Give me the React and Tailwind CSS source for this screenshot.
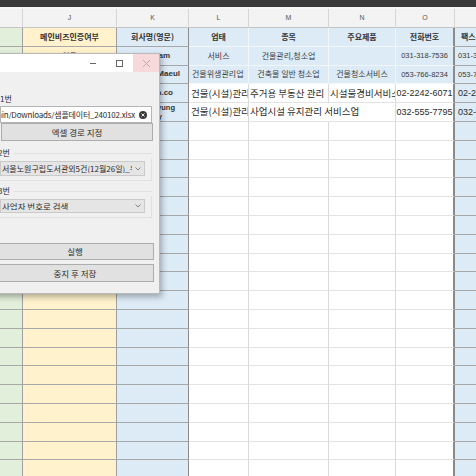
import React from 'react';

const W = ['w-[23px]', 'w-[94px]', 'w-[72px]', 'w-[60px]', 'w-[80px]', 'w-[67px]', 'w-[59px]', 'w-[60px]'];
const LETTERS = ['', 'J', 'K', 'L', 'M', 'N', 'O', ''];

function cellCls(c, r) {
  const blueRow = r <= 2;
  if (c === 0) return 'bg-[#e2efda] border-b border-r border-b-[#a8a8a8] border-r-[#a0a0a0]';
  if (c === 1) return 'bg-[#fff2cc] border-b border-r border-b-[#a8a8a8] border-r-[#a0a0a0]';
  if (c === 2) return 'bg-[#ddebf7] border-b border-r border-b-[#a8a8a8] border-r-[#8c8c8c]';
  if (c === 7) return 'bg-[#ddebf7] border-b border-b-[#a8a8a8]';
  if (c === 6)
    return blueRow
      ? 'bg-[#ddebf7] border-b border-r-2 border-b-[#f1f6fb] border-r-[#8a8a8a]'
      : 'border-b border-r-2 border-b-[#e3e3e3] border-r-[#8a8a8a]';
  return blueRow
    ? 'bg-[#ddebf7] border-b border-r border-b-[#f1f6fb] border-r-[#f1f6fb]'
    : 'border-b border-r border-b-[#e3e3e3] border-r-[#dadada]';
}

const HB = 'justify-center font-bold text-[8px] text-[#333]';
const SK = 'justify-center text-[8px] text-[#3a3a3a]';
const SKL = 'justify-start pl-[3px] text-[8px] text-[#3a3a3a]';
const LK = 'justify-start pl-[2px] text-[9.5px] text-[#2a2a2a]';
const SP = "justify-center font-['Liberation_Sans',sans-serif] text-[7.5px] text-[#3a3a3a]";
const LP = "justify-center font-['Liberation_Sans',sans-serif] text-[9px] text-[#2a2a2a]";
const SPL = "justify-start pl-[3px] font-['Liberation_Sans',sans-serif] text-[7.5px] text-[#3a3a3a]";
const LPL = "justify-start pl-[3px] font-['Liberation_Sans',sans-serif] text-[9px] text-[#2a2a2a]";
const KE = "justify-end font-['Liberation_Sans',sans-serif] font-bold text-[8px] text-[#333]";

const CONTENT = [
  [
    null,
    { t: '메인비즈인증여부', c: HB },
    { t: '회사명(영문)', c: HB },
    { t: '업태', c: HB },
    { t: '종목', c: HB },
    { t: '주요제품', c: HB },
    { t: '전화번호', c: HB },
    { t: '팩스번호', c: 'justify-start pl-[6px] font-bold text-[8px] text-[#333]' },
  ],
  [
    null,
    { t: '없음', c: SK },
    { t: 'Clean team', c: KE + ' pr-[18px]' },
    { t: '서비스', c: SK },
    { t: '건물관리,청소업', c: SK },
    null,
    { t: '031-318-7536', c: SP },
    { t: '031-318-7537', c: SPL },
  ],
  [
    null,
    null,
    { t: 'Dongbu Maeul', c: KE + ' pr-[8px]' },
    { t: '건물위생관리업', c: SKL },
    { t: '건축물 일반 청소업', c: SK },
    { t: '건물청소서비스', c: SK },
    { t: '053-766-8234', c: SP },
    { t: '053-766-8235', c: SPL },
  ],
  [
    null,
    null,
    { t: 'Daehan.co', c: KE + ' pr-[15px]' },
    { t: '건물(시설)관리', c: LK },
    { t: '주거용 부동산 관리', c: 'justify-start pl-[1px] text-[9.5px] text-[#2a2a2a]' },
    { t: '시설물경비서비스업', c: 'justify-start pl-[1px] text-[9.5px] text-[#2a2a2a]' },
    { t: '02-2242-6071', c: LP },
    { t: '02-2242-6072', c: LPL },
  ],
  [
    null,
    null,
    { two: true },
    { t: '건물(시설)관리', c: LK },
    { t: '사업시설 유지관리 서비스업', c: 'justify-start pl-[1px] text-[9.5px] text-[#2a2a2a]', over: true },
    null,
    { t: '032-555-7795', c: LP },
    { t: '032-555-7796', c: LPL },
  ],
];

function Row({ r }) {
  const content = CONTENT[r] || [];
  return (
    <div className="flex h-[18.8px] bg-white">
      {W.map((w, c) => {
        const item = content[c];
        let base = cellCls(c, r);
        if (item && item.over) base = 'border-b border-b-[#e3e3e3] border-r border-r-transparent';
        return (
          <div
            key={c}
            className={`${w} shrink-0 h-full flex items-center whitespace-nowrap leading-none ${base} ${
              item && item.over ? 'overflow-visible relative z-[1]' : 'overflow-hidden'
            } ${item && item.c ? item.c : ''}`}
          >
            {item && item.two ? (
              <div className="w-full flex flex-col font-['Liberation_Sans',sans-serif] font-bold text-[7.5px] leading-[9px] text-[#333]">
                <span className="self-end pr-[13px]">Sungkyung</span>
                <span className="self-end pr-[26px]">Industry</span>
              </div>
            ) : item ? (
              item.t
            ) : null}
          </div>
        );
      })}
    </div>
  );
}

function Dialog() {
  return (
    <div className="absolute left-[-12px] top-[53px] w-[172px] h-[241px] bg-[#f0f0f0] border border-[#b9b9b9] shadow-[2px_3px_6px_rgba(0,0,0,0.3)] flex flex-col font-['Noto_Sans_CJK_KR',sans-serif] text-[#2b2b2b]">
      <div className="h-[18px] shrink-0 bg-white flex justify-end">
        <div className="w-[27px] flex items-center justify-center">
          <div className="w-[6px] h-px bg-[#666]" />
        </div>
        <div className="w-[27px] flex items-center justify-center">
          <div className="w-[7px] h-[7px] border border-[#666]" />
        </div>
        <div className="w-[26px] bg-[#f8d9db] flex items-center justify-center">
          <svg width="9" height="9" viewBox="0 0 9 9">
            <path d="M1 1 L8 8 M8 1 L1 8" stroke="#caa6a9" strokeWidth="1" />
          </svg>
        </div>
      </div>

      <div className="flex flex-col pl-[5px]">
        <div className="mt-[22px] ml-[6px] h-[10px] leading-[10px] text-[8px]">1번</div>

        <div className="mt-[2px] ml-[6px] mr-[7px] h-[17px] bg-white border border-[#b4b4b4] flex items-center">
          <div className="flex-1 min-w-0 overflow-hidden flex justify-end whitespace-nowrap text-[8px] leading-none tracking-[-0.2px] text-[#2b2b2b]">
            <span>C:/Users/admin/Downloads/샘플데이터_240102.xlsx</span>
          </div>
          <div className="ml-[4px] mr-[4px] w-[8px] h-[8px] rounded-full bg-[#3b3b3b] flex items-center justify-center shrink-0">
            <svg width="4" height="4" viewBox="0 0 4 4">
              <path d="M0.5 0.5 L3.5 3.5 M3.5 0.5 L0.5 3.5" stroke="#fff" strokeWidth="0.9" />
            </svg>
          </div>
        </div>

        <div className="ml-[7px] mr-[6px] h-[18px] bg-[#e1e1e1] border border-[#adadad] flex items-center justify-center text-[8.5px] leading-none">
          엑셀 경로 지정
        </div>

        <div className="mt-[7px] flex items-center h-[10px]">
          <span className="ml-[4px] text-[8px] leading-[10px]">2번</span>
          <div className="flex-1 ml-[4px] mr-[7px] border-t border-[#e0e0e0]" />
        </div>
        <div className="mr-[7px] border-r border-b border-[#e0e0e0] pl-[6px] pt-[3px] pb-[4px]">
          <div className="mr-[6px] h-[15px] bg-[#e5e5e5] border border-[#cacaca] flex items-center">
            <div className="flex-1 min-w-0 overflow-hidden whitespace-nowrap pl-[1px] text-[8px] leading-none">
              서울노원구립도서관외5건(12월26일)_우편물
            </div>
            <svg className="mx-[3px] shrink-0" width="6" height="4" viewBox="0 0 6 4">
              <path d="M0.5 0.5 L3 3 L5.5 0.5" stroke="#777" strokeWidth="0.9" fill="none" />
            </svg>
          </div>
        </div>

        <div className="mt-[5px] flex items-center h-[10px]">
          <span className="ml-[4px] text-[8px] leading-[10px]">3번</span>
          <div className="flex-1 ml-[4px] mr-[7px] border-t border-[#e0e0e0]" />
        </div>
        <div className="mr-[7px] border-r border-b border-[#e0e0e0] pl-[6px] pt-[3px] pb-[4px]">
          <div className="mr-[6px] h-[14px] bg-[#e5e5e5] border border-[#cacaca] flex items-center">
            <div className="flex-1 min-w-0 overflow-hidden whitespace-nowrap pl-[1px] text-[8.5px] leading-none">
              사업자 번호로 검색
            </div>
            <svg className="mx-[3px] shrink-0" width="6" height="4" viewBox="0 0 6 4">
              <path d="M0.5 0.5 L3 3 L5.5 0.5" stroke="#777" strokeWidth="0.9" fill="none" />
            </svg>
          </div>
        </div>

        <div className="mt-[25px] ml-[2px] mr-[5px] h-[17px] bg-[#e1e1e1] border border-[#adadad] flex items-center justify-center text-[8.5px] leading-none">
          실행
        </div>
        <div className="mt-[4px] ml-[2px] mr-[5px] h-[18px] bg-[#e1e1e1] border border-[#adadad] flex items-center justify-center text-[8.5px] leading-none">
          중지 후 저장
        </div>
      </div>
    </div>
  );
}

export default function App() {
  const rows = Array.from({ length: 24 }, (_, i) => i);
  return (
    <div className="relative w-[476px] h-[476px] overflow-hidden bg-white font-['Noto_Sans_CJK_KR',sans-serif]">
      <div className="h-[7px] bg-[#3a3a3a]" />
      <div className="h-[2px] bg-[#f7f7f7]" />
      <div className="flex h-[19px] bg-[#f3f3f3]">
        {W.map((w, c) => (
          <div
            key={c}
            className={`${w} shrink-0 h-full flex items-center justify-center border-b border-r border-b-[#c4c4c4] border-r-[#d6d6d6] text-[7px] text-[#555] font-['Liberation_Sans',sans-serif]`}
          >
            {LETTERS[c]}
          </div>
        ))}
      </div>
      {rows.map((r) => (
        <Row key={r} r={r} />
      ))}
      <Dialog />
    </div>
  );
}
